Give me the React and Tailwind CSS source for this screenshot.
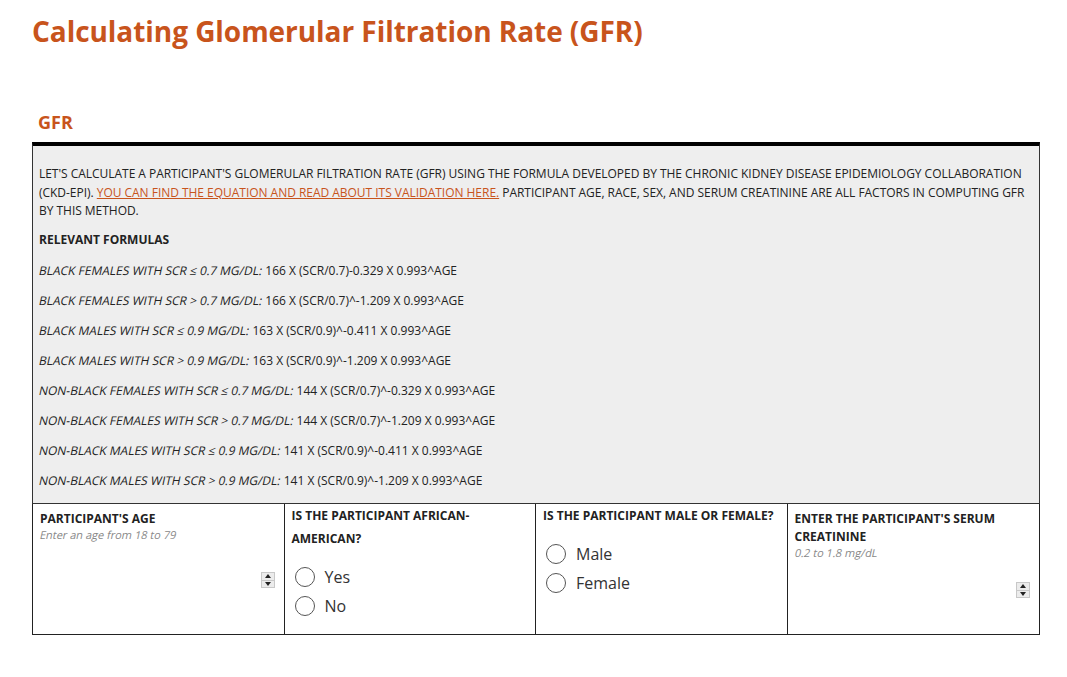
const formulas = [
  ["BLACK FEMALES WITH SCR ≤ 0.7 MG/DL:", "166 X (SCR/0.7)-0.329 X 0.993^AGE"],
  ["BLACK FEMALES WITH SCR > 0.7 MG/DL:", "166 X (SCR/0.7)^-1.209 X 0.993^AGE"],
  ["BLACK MALES WITH SCR ≤ 0.9 MG/DL:", "163 X (SCR/0.9)^-0.411 X 0.993^AGE"],
  ["BLACK MALES WITH SCR > 0.9 MG/DL:", "163 X (SCR/0.9)^-1.209 X 0.993^AGE"],
  ["NON-BLACK FEMALES WITH SCR ≤ 0.7 MG/DL:", "144 X (SCR/0.7)^-0.329 X 0.993^AGE"],
  ["NON-BLACK FEMALES WITH SCR > 0.7 MG/DL:", "144 X (SCR/0.7)^-1.209 X 0.993^AGE"],
  ["NON-BLACK MALES WITH SCR ≤ 0.9 MG/DL:", "141 X (SCR/0.9)^-0.411 X 0.993^AGE"],
  ["NON-BLACK MALES WITH SCR > 0.9 MG/DL:", "141 X (SCR/0.9)^-1.209 X 0.993^AGE"]
];

// the page's italics are slanted regular glyphs, wider than Open Sans Italic
const Slant = ({ children }) => (
  <span className="inline-block -skew-x-12 align-top">{children}</span>
);

const Spinner = () => (
  <div className="flex h-[16px] w-[14px] flex-col border border-[#c8c8c8] bg-[#ececec]">
    <div className="flex flex-1 items-center justify-center">
      <div className="h-0 w-0 border-x-[3px] border-b-[4px] border-x-transparent border-b-[#222]" />
    </div>
    <div className="h-px bg-[#c8c8c8]" />
    <div className="flex flex-1 items-center justify-center">
      <div className="h-0 w-0 border-x-[3px] border-t-[4px] border-x-transparent border-t-[#222]" />
    </div>
  </div>
);

const Radio = ({ label }) => (
  <label className="flex h-[29px] items-center gap-[10px] pl-[3px] text-[16px] text-[#333]">
    <span className="h-[20px] w-[20px] rounded-full border-[1.5px] border-[#555] bg-white" />
    {label}
  </label>
);

const App = () => {
  return (
    <div className="min-h-[677px] bg-white px-[32px] pt-[12px] text-[#222]" style={{ fontFamily: '"Open Sans", sans-serif' }}>
      <h1 className="text-[28px] font-bold leading-[38px] tracking-[-0.05px] text-[#c8541c]">
        Calculating Glomerular Filtration Rate (GFR)
      </h1>

      <h2 className="mt-[59px] pl-[6px] text-[18px] font-bold leading-[26px] text-[#c8541c]">GFR</h2>

      <div className="mt-[7px] w-[1008px]">
        <div className="border-t-[4px] border-x border-b border-black border-x-[#333] border-b-[#333] bg-[#eeeeee] px-[6px] pb-[1px] pt-[19px] text-[12px] leading-[18.5px]">
          <p className="mb-[10px] tracking-[-0.03px]">
            LET'S CALCULATE A PARTICIPANT'S GLOMERULAR FILTRATION RATE (GFR) USING THE FORMULA DEVELOPED BY THE CHRONIC KIDNEY DISEASE EPIDEMIOLOGY COLLABORATION (CKD-EPI).{" "}
            <a className="text-[#c8541c] underline">YOU CAN FIND THE EQUATION AND READ ABOUT ITS VALIDATION HERE.</a>{" "}
            PARTICIPANT AGE, RACE, SEX, AND SERUM CREATININE ARE ALL FACTORS IN COMPUTING GFR BY THIS METHOD.
          </p>
          <p className="mb-[13px] font-bold">RELEVANT FORMULAS</p>
          {formulas.map(([label, value]) => (
            <p key={label} className="mb-[12px] h-[18px] leading-[18px]">
              <Slant>{label}</Slant> {value}
            </p>
          ))}
        </div>

        <div className="grid h-[131px] grid-cols-4 border-x border-b border-[#222] bg-white">
          <div className="flex flex-col border-r border-[#222] px-[7px] pt-[6px]">
            <div className="text-[12px] font-bold leading-[18px]">PARTICIPANT'S AGE</div>
            <div className="h-[14px] text-[11px] leading-[14px] text-[#888]">
              <Slant>Enter an age from 18 to 79</Slant>
            </div>
            <div className="mt-[30px] flex justify-end pr-[2px]">
              <Spinner />
            </div>
          </div>

          <div className="border-r border-[#222] px-[7px]">
            <div className="text-[12px] font-bold leading-[23px]">IS THE PARTICIPANT AFRICAN-<br />AMERICAN?</div>
            <div className="mt-[12px]">
              <Radio label="Yes" />
              <Radio label="No" />
            </div>
          </div>

          <div className="border-r border-[#222] px-[7px]">
            <div className="text-[12px] font-bold leading-[23px]">IS THE PARTICIPANT MALE OR FEMALE?</div>
            <div className="mt-[12px]">
              <Radio label="Male" />
              <Radio label="Female" />
            </div>
          </div>

          <div className="flex flex-col px-[7px] pt-[6px]">
            <div className="text-[12px] font-bold leading-[18px]">ENTER THE PARTICIPANT'S SERUM<br />CREATININE</div>
            <div className="h-[14px] text-[11px] leading-[14px] text-[#888]">
              <Slant>0.2 to 1.8 mg/dL</Slant>
            </div>
            <div className="mt-[22px] flex justify-end pr-[2px]">
              <Spinner />
            </div>
          </div>
        </div>
      </div>
    </div>
  );
};

export default App;
